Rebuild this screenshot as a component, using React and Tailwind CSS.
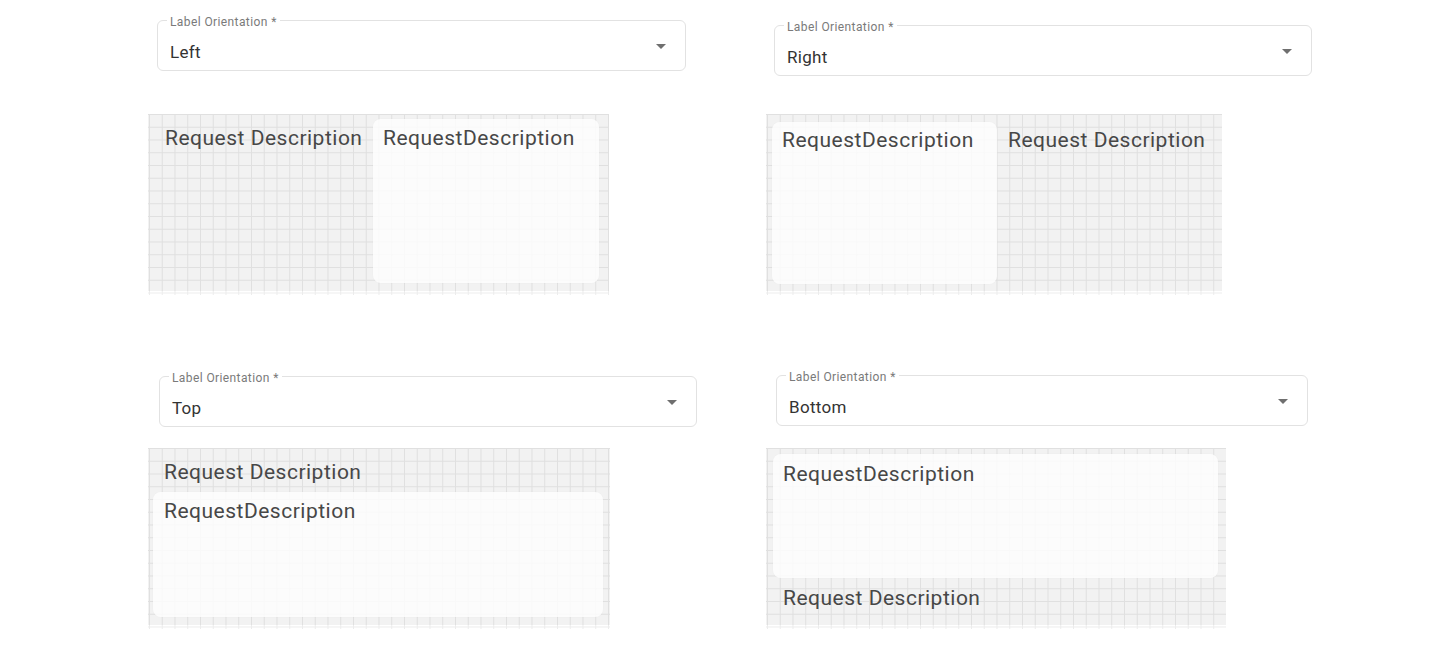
import React from "react";

const font = { fontFamily: "Roboto, 'Liberation Sans', sans-serif" };

const gridBg =
  "bg-white bg-[linear-gradient(to_right,#ececec_1px,transparent_1px),linear-gradient(to_bottom,#ececec_1px,transparent_1px)] bg-[size:12.75px_12.75px] bg-[position:1px_0px]";

const labelText = "text-[21px] leading-[30px] tracking-[0.5px] text-[#474747] whitespace-nowrap";
const cardBase = "rounded-[8px] bg-white/80 shadow-[0_0_2px_rgba(0,0,0,0.03)]";

const SelectBox = ({ value, className }) => (
  <div className={`relative h-[51px] rounded-[6px] border border-[#e2e2e2] bg-white ${className}`}>
    <span className="absolute left-[9px] -top-[6px] bg-white px-[3px] text-[12px] leading-[14px] tracking-[0.4px] text-[#7a7a7a]">
      Label Orientation *
    </span>
    <div className="pl-[12px] pt-[19px] text-[17px] leading-[24px] tracking-[0.3px] text-[#333]">{value}</div>
    <svg
      viewBox="0 0 24 24"
      className="absolute right-[12px] top-[13px] h-[24px] w-[24px] fill-[#6f6f6f]"
    >
      <path d="M7 10l5 5 5-5z" />
    </svg>
  </div>
);

const Panel = ({ width, children, className = "" }) => (
  <div className={`${gridBg} h-[181px] ${width}`}>
    <div className={`h-[177px] bg-black/[0.05] ${className}`}>{children}</div>
  </div>
);

export default function App() {
  return (
    <div style={font} className="min-h-screen bg-white pl-[148px]">
      {/* ------- Row 1 ------- */}
      <div className="flex items-start h-[295px]">
        <div className="w-[618px] flex flex-col">
          <SelectBox value="Left" className="ml-[9px] mt-[20px] w-[529px]" />
          <div className="mt-[43px]">
            <Panel width="w-[461px]" className="flex flex-row">
              <div className={`w-[225px] shrink-0 pl-[17px] pt-[9px] ${labelText}`}>Request Description</div>
              <div className={`${cardBase} mt-[5px] h-[164px] w-[226px] shrink-0 pl-[10px] pt-[4px]`}>
                <span className={labelText}>RequestDescription</span>
              </div>
            </Panel>
          </div>
        </div>
        <div className="flex flex-col">
          <SelectBox value="Right" className="ml-[8px] mt-[25px] w-[538px]" />
          <div className="mt-[38px]">
            <Panel width="w-[456px]" className="flex flex-row">
              <div className={`${cardBase} ml-[6px] mt-[8px] h-[162px] w-[225px] shrink-0 pl-[10px] pt-[3px]`}>
                <span className={labelText}>RequestDescription</span>
              </div>
              <div className={`ml-[11px] pt-[11px] ${labelText}`}>Request Description</div>
            </Panel>
          </div>
        </div>
      </div>

      {/* ------- Row 2 ------- */}
      <div className="flex items-start">
        <div className="w-[618px] flex flex-col">
          <SelectBox value="Top" className="ml-[11px] mt-[81px] w-[538px]" />
          <div className="mt-[21px]">
            <Panel width="w-[462px]" className="flex flex-col">
              <div className={`pl-[16px] pt-[9px] ${labelText}`}>Request Description</div>
              <div className={`${cardBase} ml-[5px] mt-[5px] h-[125px] w-[450px] pl-[11px] pt-[4px]`}>
                <span className={labelText}>RequestDescription</span>
              </div>
            </Panel>
          </div>
        </div>
        <div className="flex flex-col">
          <SelectBox value="Bottom" className="ml-[10px] mt-[80px] w-[532px]" />
          <div className="mt-[22px]">
            <Panel width="w-[460px]" className="flex flex-col">
              <div className={`${cardBase} ml-[7px] mt-[6px] h-[124px] w-[445px] pl-[10px] pt-[5px]`}>
                <span className={labelText}>RequestDescription</span>
              </div>
              <div className={`pl-[17px] mt-[5px] ${labelText}`}>Request Description</div>
            </Panel>
          </div>
        </div>
      </div>
    </div>
  );
}
